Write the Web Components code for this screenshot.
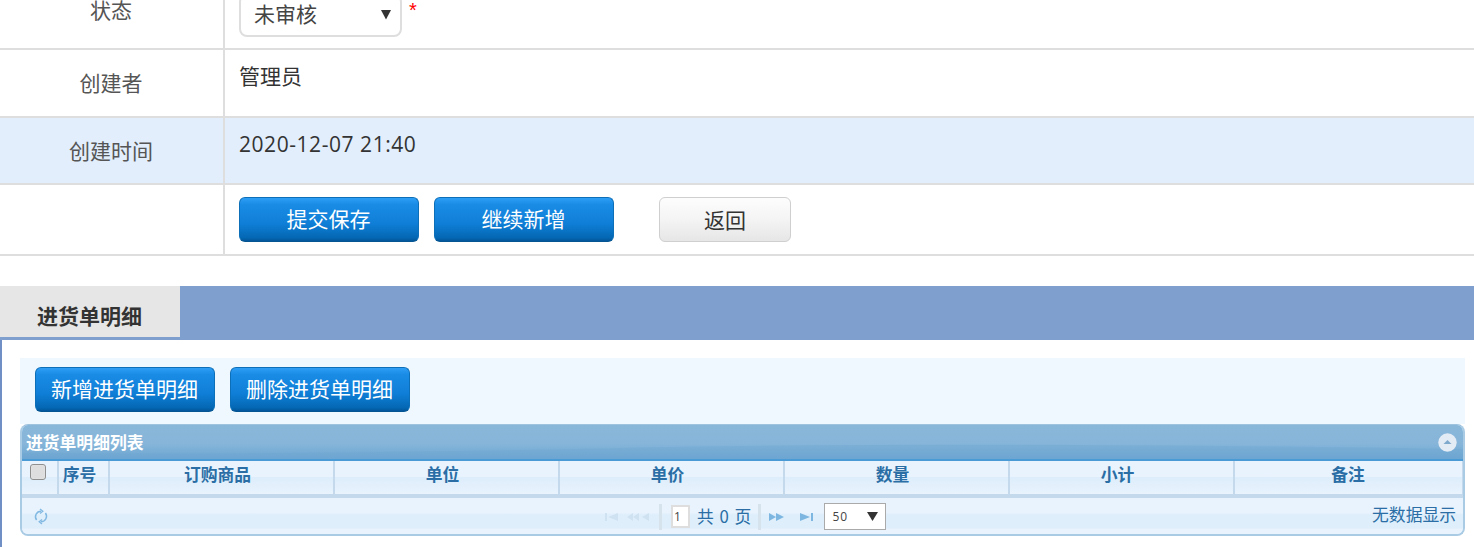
<!DOCTYPE html>
<html lang="zh">
<head>
<meta charset="utf-8">
<title>进货单明细</title>
<style>
  html, body { margin: 0; padding: 0; background: #fff; overflow: hidden; }
  body { font-family: "Open Sans", "Noto Sans CJK SC", sans-serif; height: 547px; }
</style>
</head>
<body>
<form-row label="状态" first>
  <status-select></status-select>
</form-row>
<form-row label="创建者" tall><span style="display:block;margin-top:-3px">管理员</span></form-row>
<form-row label="创建时间" shade><span style="display:block;margin-top:-3px;letter-spacing:.55px">2020-12-07 21:40</span></form-row>
<form-row last>
  <div style="display:flex;margin-top:-3px">
    <blue-button>提交保存</blue-button>
    <blue-button style="margin-left:15px">继续新增</blue-button>
    <gray-button style="margin-left:45px">返回</gray-button>
  </div>
</form-row>
<detail-tabs title="进货单明细">
  <div style="display:flex;gap:15px">
    <blue-button small>新增进货单明细</blue-button>
    <blue-button small>删除进货单明细</blue-button>
  </div>
  <detail-grid slot="grid"></detail-grid>
</detail-tabs>

<script>
const CJK = '"Noto Sans CJK SC", sans-serif';

class FormRow extends HTMLElement {
  constructor() {
    super();
    this.attachShadow({ mode: 'open' });
    this.shadowRoot.innerHTML = `
      <style>
        :host { display: grid; grid-template-columns: 225px 1fr; box-sizing: border-box;
          height: 67px; border-bottom: 2px solid #dedede; color: #333; font-size: 21px; overflow: hidden;
          font-family: "Open Sans", ${CJK}; line-height: 28px; }
        :host([first]) { height: 50px; }
        :host([tall]) { height: 68px; }
        :host([shade]) { background: #e2eefb; }
        :host([last]) { height: 71px; }
        .label { border-right: 2px solid #dedede; text-align: center; color: #555; padding-top: 19px; padding-right: 1px; }
        :host([first]) .label { padding-top: 0; line-height: 21px; }
        .value { padding: 15px 0 0 14px; }
        :host([first]) .value { padding-top: 0; }
      </style>
      <div class="label"></div>
      <div class="value"><slot></slot></div>`;
    this.shadowRoot.querySelector('.label').textContent = this.getAttribute('label') || '';
  }
}
customElements.define('form-row', FormRow);

class StatusSelect extends HTMLElement {
  constructor() {
    super();
    this.attachShadow({ mode: 'open' });
    this.shadowRoot.innerHTML = `
      <style>
        :host { display: flex; align-items: flex-start; }
        .box { width: 159px; height: 39px; margin-top: -6px; border: 2px solid #dedede; border-radius: 8px;
          background: #fff; display: flex; justify-content: space-between; color: #444; box-sizing: content-box; }
        .txt { padding: 3px 0 0 13px; line-height: 28px; margin-top: 1px; }
        svg { margin: 14px 9px 0 0; }
        .star { color: #f00; font-size: 20px; line-height: 20px; margin: 0 0 0 7px; font-family: "Liberation Sans", sans-serif; }
      </style>
      <div class="box"><span class="txt">未审核</span>
        <svg width="10" height="10" viewBox="0 0 10 10"><path d="M0 0H10L5 9.500Z" fill="#333"/></svg></div>
      <span class="star">*</span>`;
  }
}
customElements.define('status-select', StatusSelect);

class BlueButton extends HTMLElement {
  constructor() {
    super();
    this.attachShadow({ mode: 'open' });
    this.shadowRoot.innerHTML = `
      <style>
        :host { display: inline-flex; align-items: center; justify-content: center; box-sizing: border-box;
          width: 180px; height: 45px; border-radius: 6px; color: #fff; font-size: 21px;
          font-family: ${CJK}; padding-bottom: 3px; padding-right: 1px;
          background: linear-gradient(#2e9ef5 0, #1a8ce6 15%, #0f7ed6 60%, #0468b4 92%, #03569a 100%);
          border: 1px solid #0c6fb8; border-bottom-color: #045591; }
      </style><slot></slot>`;
  }
}
customElements.define('blue-button', BlueButton);

class GrayButton extends HTMLElement {
  constructor() {
    super();
    this.attachShadow({ mode: 'open' });
    this.shadowRoot.innerHTML = `
      <style>
        :host { display: inline-flex; align-items: center; justify-content: center; box-sizing: border-box;
          width: 132px; height: 45px; border-radius: 6px; color: #333; font-size: 21px; font-family: ${CJK};
          padding-bottom: 2px;
          background: linear-gradient(#fdfdfd, #f4f4f4 50%, #e6e6e6); border: 1px solid #cfcfcf; }
      </style><slot></slot>`;
  }
}
customElements.define('gray-button', GrayButton);

class DetailTabs extends HTMLElement {
  constructor() {
    super();
    this.attachShadow({ mode: 'open' });
    this.shadowRoot.innerHTML = `
      <style>
        :host { display: block; margin-top: 30px; font-family: ${CJK}; }
        .bar { height: 54px; background: #7f9fcf; }
        .tab { width: 180px; height: 51px; background: #e6e6e6; color: #333; font-size: 21px; font-weight: 700;
          box-sizing: border-box; padding: 14px 0 0 37px; line-height: 31px; }
        .body { border-left: 2px solid #6f8fc5; padding: 18px 9px 11px 18px; }
        .tools { background: #eff7ff; height: 66px; padding: 9px 15px 0; box-sizing: border-box; }
      </style>
      <div class="bar"><div class="tab"></div></div>
      <div class="body">
        <div class="tools"><slot></slot></div>
        <slot name="grid"></slot>
      </div>`;
    this.shadowRoot.querySelector('.tab').textContent = this.getAttribute('title');
  }
}
customElements.define('detail-tabs', DetailTabs);

class DetailGrid extends HTMLElement {
  constructor() {
    super();
    this.attachShadow({ mode: 'open' });
    const cols = [['序号', 51], ['订购商品', 225], ['单位', 225], ['单价', 225], ['数量', 225], ['小计', 225], ['备注', 229]];
    this.shadowRoot.innerHTML = `
      <style>
        :host { display: block; box-sizing: border-box; width: 1445px; height: 112px; font-family: ${CJK};
          border: 2px solid #a9cbe4; border-top: 1px solid #9ec3df; border-radius: 8px; overflow: hidden; background: #e6f2fd; }
        .title { position: relative; height: 36px; box-sizing: border-box; border-bottom: 2px solid #4a9ad6;
          background: linear-gradient(#89b7da, #86b5d9 55%, #6ca6d2); color: #fff; font-size: 16.800px; font-weight: 700;
          line-height: 34px; padding-left: 4px; overflow: hidden; }
        .title svg.wave { position: absolute; left: 0; top: 0; }
        .title span { position: relative; }
        .collapse { position: absolute; right: 6px; top: 8px; }
        .head { display: flex; height: 33px; box-sizing: border-box;
          background: linear-gradient(#e8f3fd 50%, #deedfb 50%, #e8f3fd); }
        .head div { box-sizing: border-box; border-right: 2px solid #c4d9ec; text-align: center; color: #2a6ea5;
          font-size: 16.800px; font-weight: 700; line-height: 27px; padding-right: 8px; flex: none; }
        .head div:last-child { padding-right: 1px; }
        .head .check { width: 37px; display: flex; padding: 3px 0 0 8px; }
        .check i { display: block; box-sizing: border-box; width: 16px; height: 16px; border: 1px solid #8f8f8f;
          border-radius: 3px; background: #dedede; box-shadow: inset 0 0 1px #fff; }
        .sep { height: 4px; background: #c4d9ec; }
        .pager { height: 37px; display: flex; align-items: center; position: relative; box-sizing: border-box;
          background: linear-gradient(#e8f3fd 40%, #dfeefb 45%, #dfeefb 80%, #e8f3fd 85%); color: #2a6ea5; font-size: 16.800px; }
        .center { position: absolute; left: 582px; top: 0; height: 37px; display: flex; align-items: center; }
        .bsep { width: 3px; height: 26px; background: #d6e2ec; margin: 0 9px; }
        .bsep.next { margin: 0 8px 0 6px; }
        .num { box-sizing: border-box; width: 19px; height: 23px; border: 2px solid #dedede; background: #fff;
          color: #444; font: 12px/19px "Open Sans", sans-serif; padding-left: 1px; margin-right: 7px; }
        .total { letter-spacing: 1px; white-space: pre; line-height: 22px; margin-top: -2px; }
        .size { box-sizing: border-box; width: 62px; height: 27px; border: 1px solid #aaa; background: #fff;
          color: #444; font: 12px/25px "Open Sans", sans-serif; letter-spacing: 1px; padding-left: 7px; position: relative; }
        .size svg { position: absolute; right: 7px; top: 8px; }
        .msg { position: absolute; right: 7px; top: 3px; line-height: 26px; }
        .ic { display: block; }
      </style>
      <div class="title">
        <svg class="wave" width="1445" height="34"><path d="M0 28Q300 30 600 23T1445 24V34H0Z" fill="#6ca6d2" opacity=".35"/></svg>
        <span>进货单明细列表</span>
        <svg class="collapse" width="19" height="19" viewBox="0 0 19 19"><circle cx="9.500" cy="9.500" r="9.200" fill="#e3ebf5"/><path d="M5.500 11L9.500 7L13.500 11Z" fill="#7fa9cc"/></svg>
      </div>
      <div class="head">
        <div class="check"><i></i></div>
        ${cols.map(c => `<div style="width:${c[1]}px">${c[0]}</div>`).join('')}
      </div>
      <div class="sep"></div>
      <div class="pager">
        <svg class="ic" style="margin-left:11px" width="16" height="17" viewBox="0 0 16 17" fill="none" stroke="#82b9e2" stroke-width="1.500">
          <path d="M3.600 12A5.500 5.500 0 0 1 8 3.200M12.400 5A5.500 5.500 0 0 1 8 13.800"/>
          <path d="M7 1L9.800 3.200L7 5.400M9 11.600L6.200 13.800L9 16" stroke-width="1.300"/>
        </svg>
        <div class="center">
          <svg width="46" height="12" viewBox="0 0 46 12" fill="#cfe2f2"><rect x="1" y="2" width="2" height="8"/><path d="M14 2V10L4 6ZM29 2V10L23 6ZM35 2V10L29 6ZM45 2V10L38 6Z"/></svg>
          <div class="bsep"></div>
          <div class="num">1</div>
          <span class="total">共 0 页</span>
          <div class="bsep next"></div>
          <svg width="46" height="12" viewBox="0 0 46 12" fill="#7db6e0"><path d="M0 2V10L7 6ZM7 2V10L15 6ZM31 2V10L41 6Z"/><rect x="42" y="2" width="2" height="8"/></svg>
          <div class="size" style="margin-left:9px">50<svg width="11" height="9" viewBox="0 0 11 9"><path d="M0 0H11L5.500 9Z" fill="#333"/></svg></div>
        </div>
        <span class="msg">无数据显示</span>
      </div>`;
  }
}
customElements.define('detail-grid', DetailGrid);
</script>
</body>
</html>
